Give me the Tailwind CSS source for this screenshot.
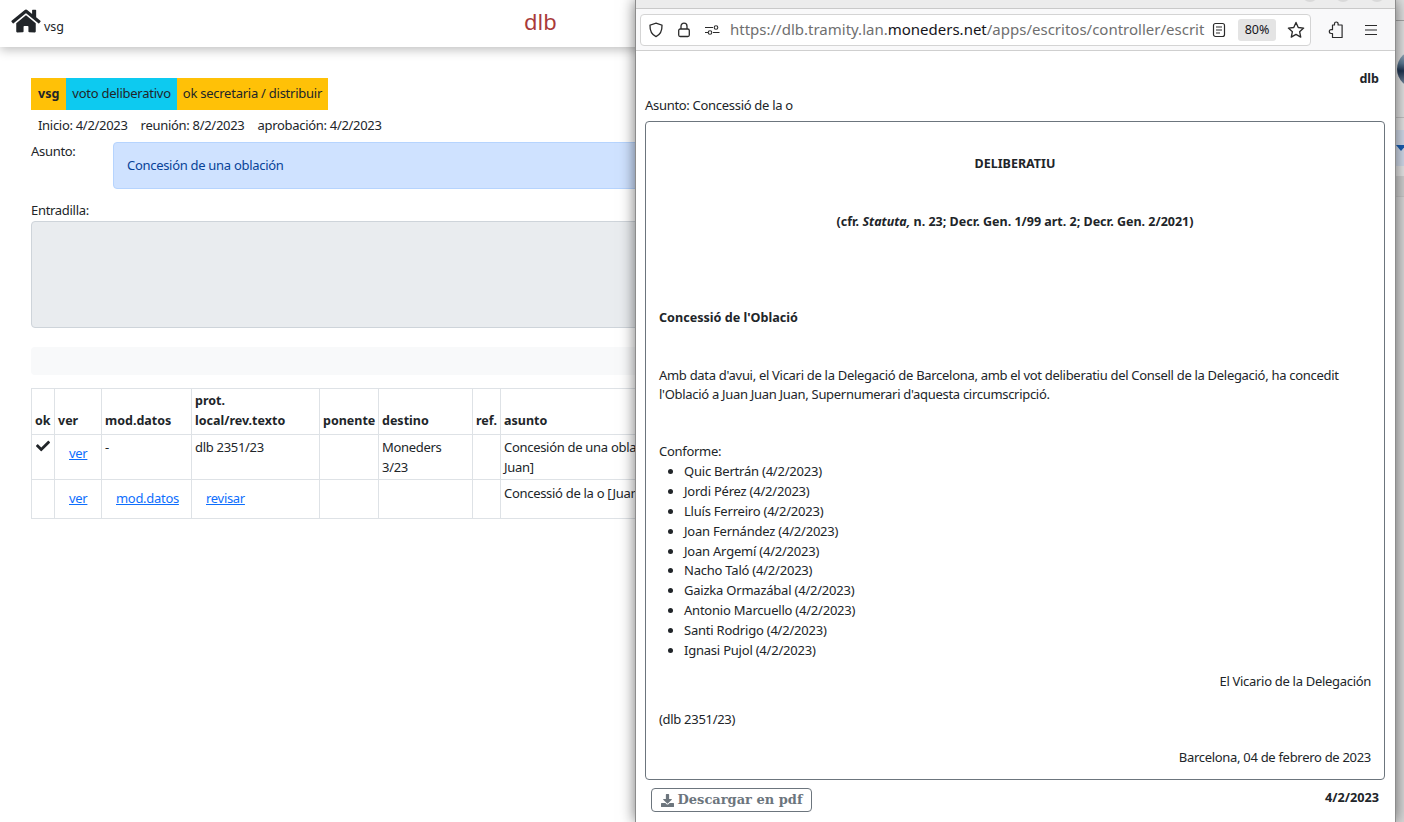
<!doctype html>
<html><head><meta charset="utf-8"><script src="https://cdn.jsdelivr.net/npm/@tailwindcss/browser@4"></script></head>
<body class="m-0 bg-white">
<div class="relative w-[1404px] h-[822px] overflow-hidden bg-white text-[#212529] text-[13px] leading-[19.8px] tracking-[-0.3px] font-['Noto_Sans',sans-serif]">
  <!-- base page -->
  <header class="h-[47px] bg-white shadow-[0_3px_10px_rgba(0,0,0,0.25)] flex relative">
    <div class="flex items-start pl-[11px] pt-[8px] w-[524px] shrink-0">
      <svg class="w-[30px] h-[26px]" viewBox="0 0 576 512" fill="#212529"><path d="M280.4 148.3 96 300.1V464a16 16 0 0 0 16 16l112-.3a16 16 0 0 0 15.9-16V368a16 16 0 0 1 16-16h64a16 16 0 0 1 16 16v95.6a16 16 0 0 0 16 16.1l112 .3a16 16 0 0 0 16-16V300L295.700 148.300a12.200 12.200 0 0 0-15.300 0zM571.600 251.500 488 182.600V44.100a12 12 0 0 0-12-12h-56a12 12 0 0 0-12 12v72.600L318.500 43a48 48 0 0 0-61 0L4.300 251.500a12 12 0 0 0-1.600 16.900l25.500 31a12 12 0 0 0 16.900 1.600l235.200-193.700a12.200 12.200 0 0 1 15.300 0L530.900 301a12 12 0 0 0 16.900-1.600l25.500-31a12 12 0 0 0-1.700-16.900z"/></svg>
      <span class="ml-[3px] mt-[9px] text-[12.500px] tracking-normal">vsg</span>
    </div>
    <div class="text-[#a93a3a] text-[22px] leading-[28px] pt-[7px] tracking-normal">dlb</div>
  </header>
  <main class="pl-[31px] pt-[31px] w-[640px]">
    <div class="flex h-[32px] leading-[31px]">
      <div class="bg-[#ffc107] px-[7px] font-bold text-[12.500px] tracking-normal">vsg</div>
      <div class="bg-[#0dcaf0] px-[6px] tracking-[-0.25px]">voto deliberativo</div>
      <div class="bg-[#ffc107] px-[6px] tracking-[-0.25px]">ok secretaria / distribuir</div>
    </div>
    <div class="flex gap-[13px] pl-[7px] pt-[1px] mt-[5px] h-[21px]"><span>Inicio: 4/2/2023</span><span>reunión: 8/2/2023</span><span>aprobación: 4/2/2023</span></div>
    <div class="flex mt-[6px]">
      <div class="w-[82px] shrink-0">Asunto:</div>
      <div class="w-[530px] h-[47px] bg-[#cfe2ff] border border-[#b6d4fe] rounded-[4px] text-[#084298] pl-[13px] pt-[13px] shrink-0">Concesión de una oblación</div>
    </div>
    <div class="mt-[11px] pt-[1px] h-[20px]">Entradilla:</div>
    <div class="w-[612px] h-[107px] mt-[1px] bg-[#e9ecef] border border-[#ced4da] rounded-[4px]"></div>
    <div class="w-[612px] h-[28px] mt-[19px] bg-[#f8f9fa] rounded-[4px]"></div>
    <table class="mt-[13px] border-collapse table-fixed w-[620px] text-[#212529]">
      <colgroup><col class="w-[23px]"><col class="w-[47px]"><col class="w-[90px]"><col class="w-[128px]"><col class="w-[59px]"><col class="w-[94px]"><col class="w-[28px]"><col class="w-[151px]"></colgroup>
      <thead><tr class="h-[46px] text-left align-bottom font-bold text-[12.500px] tracking-normal">
        <th class="border border-[#dee2e6] px-[3px] pb-[3px]">ok</th>
        <th class="border border-[#dee2e6] px-[3px] pb-[3px]">ver</th>
        <th class="border border-[#dee2e6] px-[3px] pb-[3px]">mod.datos</th>
        <th class="border border-[#dee2e6] px-[3px] pb-[3px]">prot.<br>local/rev.texto</th>
        <th class="border border-[#dee2e6] px-[3px] pb-[3px]">ponente</th>
        <th class="border border-[#dee2e6] px-[3px] pb-[3px]">destino</th>
        <th class="border border-[#dee2e6] px-[3px] pb-[3px]">ref.</th>
        <th class="border border-[#dee2e6] px-[3px] pb-[3px] whitespace-nowrap">asunto</th>
      </tr></thead>
      <tbody>
      <tr class="h-[45px] align-top">
        <td class="border border-[#dee2e6] px-[4px] pt-[3px]"><svg class="w-[14px] h-[14px] mt-[1px]" viewBox="0 0 512 512" fill="#212529"><path d="M173.900 439.400 7.500 273c-10-10-10-26.200 0-36.200l36.200-36.200c10-10 26.200-10 36.200 0L192 312.700 432.100 72.600c10-10 26.200-10 36.200 0l36.200 36.200c10 10 10 26.200 0 36.200L210.100 439.400c-10 10-26.200 10-36.200 0z"/></svg></td>
        <td class="border border-[#dee2e6] px-[3px] pl-[14px] pt-[9px]"><a class="text-[#0d6efd] underline">ver</a></td>
        <td class="border border-[#dee2e6] px-[3px] pt-[3px]">-</td>
        <td class="border border-[#dee2e6] px-[3px] pt-[3px]">dlb 2351/23</td>
        <td class="border border-[#dee2e6]"></td>
        <td class="border border-[#dee2e6] px-[3px] pt-[3px]">Moneders<br>3/23</td>
        <td class="border border-[#dee2e6]"></td>
        <td class="border border-[#dee2e6] px-[3px] pt-[3px] whitespace-nowrap">Concesión de una oblación<br>Juan]</td>
      </tr>
      <tr class="h-[39px] align-top">
        <td class="border border-[#dee2e6]"></td>
        <td class="border border-[#dee2e6] px-[3px] pl-[14px] pt-[9px]"><a class="text-[#0d6efd] underline">ver</a></td>
        <td class="border border-[#dee2e6] pl-[14px] pt-[9px]"><a class="text-[#0d6efd] underline">mod.datos</a></td>
        <td class="border border-[#dee2e6] pl-[14px] pt-[9px]"><a class="text-[#0d6efd] underline">revisar</a></td>
        <td class="border border-[#dee2e6]"></td>
        <td class="border border-[#dee2e6]"></td>
        <td class="border border-[#dee2e6]"></td>
        <td class="border border-[#dee2e6] px-[3px] pt-[4px] whitespace-nowrap">Concessió de la o [Juan Juan]</td>
      </tr>
      </tbody>
    </table>
  </main>
  <!-- underlying strip on the right -->
  <div class="absolute left-[1396px] top-0 w-[8px] h-[822px] bg-[#d4d4d4] flex flex-col">
    <div class="h-[21px] bg-[#e2e2e2] border-b border-[#a8a8a8]"></div>
    <div class="h-[97px] bg-[#e4e4e4] border-b border-[#c4c4c4] relative"><div class="absolute left-[1px] top-[29px] w-[38px] h-[38px] rounded-full bg-[linear-gradient(180deg,#a9bccb_0%,#5d7a94_35%,#1f3350_55%,#8ba0b4_100%)]"></div></div>
    <div class="h-[12px] bg-[#e6e6e6]"></div>
    <div class="h-[36px] bg-[#d3dcec] flex justify-start"><div class="w-0 h-0 border-l-[5px] border-r-[5px] border-t-[6px] border-l-transparent border-r-transparent border-t-[#1a5fb4] mt-[15px]"></div></div>
    <div class="h-[10px] bg-[#e8e8e8]"></div>
    <div class="h-[21px] bg-[#d2d2d2] border-b border-[#c8c8c8]"></div>
    <div class="flex-1 bg-[#dadada]"></div>
  </div>
  <!-- popup window -->
  <section class="absolute left-[635px] top-0 w-[761px] h-[822px] bg-white border-l border-r border-[#8c8c8c] shadow-[0_0_14px_rgba(0,0,0,0.55)] flex flex-col overflow-hidden">
    <div class="h-[9px] bg-[#ececec] border-b border-[#c9c9c9] shrink-0 relative">
      <div class="absolute left-[666px] -top-[14px] w-[16px] h-[16px] rounded-full bg-[#d9d9d9]"></div>
      <div class="absolute left-[699px] -top-[14px] w-[16px] h-[16px] rounded-full bg-[#d9d9d9]"></div>
      <div class="absolute left-[733px] -top-[14px] w-[16px] h-[16px] rounded-full bg-[#d9d9d9]"></div>
    </div>
    <div class="h-[42px] bg-[#f9f9fa] border-b border-[#cfcfcf] shrink-0 flex items-center pl-[4px]">
      <div class="w-[671px] h-[32px] bg-white border border-[#d4d4d4] rounded-[4px] flex items-center pl-[7px] shrink-0">
        <svg class="w-[16px] h-[16px] shrink-0" viewBox="0 0 16 16" fill="none" stroke="#2b2b2b" stroke-width="1.300"><path d="M8 1.200 14 3.200c.2 5.200-1.700 9.300-6 11.400C3.700 12.500 1.800 8.400 2 3.200z"/></svg>
        <svg class="w-[16px] h-[16px] ml-[12px] shrink-0" viewBox="0 0 16 16" fill="none" stroke="#2b2b2b" stroke-width="1.300"><rect x="2.700" y="7" width="10.600" height="7.500" rx="1.500"/><path d="M5 7V4.200a3 3 0 0 1 6 0V7"/></svg>
        <svg class="w-[16px] h-[16px] ml-[12px] shrink-0" viewBox="0 0 16 16" fill="none" stroke="#2b2b2b" stroke-width="1.100"><path d="M1 5.500h8M1 10.500h3M9 10.500h6.500"/><circle cx="12" cy="5.500" r="1.800"/><circle cx="6" cy="10.500" r="1.800"/></svg>
        <div class="ml-[10px] w-[476px] pt-[1px] whitespace-nowrap text-[15px] tracking-normal text-[#6f6f6f] shrink-0">https://dlb.tramity.lan.<span class="text-[#15141a]">moneders.net</span>/apps/escritos/controller/escrit</div>
        <svg class="w-[16px] h-[16px] ml-[5px] shrink-0" viewBox="0 0 16 16" fill="none" stroke="#2b2b2b" stroke-width="1.200"><rect x="2.500" y="1.500" width="11" height="13" rx="2"/><path d="M5 5h6M5 8h6M5 11h4"/></svg>
        <div class="ml-[11px] w-[38px] h-[22px] bg-[#e4e4e4] rounded-[3px] text-[12.500px] leading-[22px] text-center text-[#15141a] tracking-normal shrink-0">80%</div>
        <svg class="w-[18px] h-[18px] ml-[11px] shrink-0" viewBox="0 0 16 16" fill="none" stroke="#2b2b2b" stroke-width="1.200" stroke-linejoin="round"><path d="M8 1.300 10 5.800l4.800.5-3.600 3.200 1 4.800L8 11.900l-4.200 2.400 1-4.800L1.200 6.300 6 5.800z"/></svg>
      </div>
      <svg class="w-[16px] h-[18px] ml-[17px] shrink-0" viewBox="0 0 16 18" fill="none" stroke="#2b2b2b" stroke-width="1.200" stroke-linejoin="round"><path d="M6.500 4V2.800a1.800 1.800 0 0 1 3.600 0V4h4v12.500H4.500v-4H3.200a1.900 1.900 0 0 1 0-3.800h1.300V4z"/></svg>
      <svg class="w-[16px] h-[16px] ml-[19px] shrink-0" viewBox="0 0 16 16" fill="none" stroke="#2b2b2b" stroke-width="1.200"><path d="M2 3.500h12M2 8h12M2 12.500h12"/></svg>
    </div>
    <div class="relative flex-1 px-[9px]">
      <div class="text-right font-bold text-[12.500px] tracking-normal pr-[7px] pt-[18px] h-[44px]">dlb</div>
      <div class="h-[26px] pt-[1px]">Asunto: Concessió de la o</div>
      <div class="w-[740px] h-[659px] border border-[#6c757d] rounded-[4px] px-[13px]">
        <div class="text-center font-bold text-[12.500px] tracking-normal mt-[32px] h-[20px]">DELIBERATIU</div>
        <div class="text-center font-bold text-[12.500px] tracking-normal mt-[38px] h-[20px]">(cfr. <i>Statuta,</i> n. 23; Decr. Gen. 1/99 art. 2; Decr. Gen. 2/2021)</div>
        <div class="font-bold text-[12.600px] tracking-normal mt-[76px] h-[20px]">Concessió de l'Oblació</div>
        <p class="mt-[38px] leading-[19px]">Amb data d'avui, el Vicari de la Delegació de Barcelona, amb el vot deliberatiu del Consell de la Delegació, ha concedit<br>l'Oblació a Juan Juan Juan, Supernumerari d'aquesta circumscripció.</p>
        <div class="mt-[38px]">Conforme:</div>
        <ul class="list-disc pl-[25px] mt-[0.6px] tracking-[-0.22px]">
          <li>Quic Bertrán (4/2/2023)</li><li>Jordi Pérez (4/2/2023)</li><li>Lluís Ferreiro (4/2/2023)</li><li>Joan Fernández (4/2/2023)</li><li>Joan Argemí (4/2/2023)</li><li>Nacho Taló (4/2/2023)</li><li>Gaizka Ormazábal (4/2/2023)</li><li>Antonio Marcuello (4/2/2023)</li><li>Santi Rodrigo (4/2/2023)</li><li>Ignasi Pujol (4/2/2023)</li>
        </ul>
        <div class="text-right mt-[12px]">El Vicario de la Delegación</div>
        <div class="mt-[18px]">(dlb 2351/23)</div>
        <div class="text-right mt-[18px]">Barcelona, 04 de febrero de 2023</div>
      </div>
      <div class="flex justify-between items-start mt-[8px] pl-[6px] pr-[7px]">
        <button class="h-[24px] w-[161px] border border-[#6c757d] rounded-[4px] flex items-center justify-center gap-[4px] text-[#6c757d] font-bold font-['DejaVu_Serif',serif] text-[13px] tracking-normal"><svg class="w-[13px] h-[13px]" viewBox="0 0 512 512" fill="#6c757d"><path d="M216 0h80c13.300 0 24 10.700 24 24v168h87.700c17.800 0 26.700 21.500 14.100 34.100L269.700 378.300c-7.500 7.500-19.800 7.500-27.300 0L90.100 226.100c-12.600-12.600-3.700-34.100 14.100-34.100H192V24c0-13.300 10.700-24 24-24zm296 376v112c0 13.300-10.700 24-24 24H24c-13.300 0-24-10.700-24-24V376c0-13.300 10.700-24 24-24h146.700l49 49c20.100 20.100 52.500 20.100 72.600 0l49-49H488c13.300 0 24 10.700 24 24z"/></svg>Descargar en pdf</button>
        <div class="font-bold text-[12.700px] tracking-normal">4/2/2023</div>
      </div>
    </div>
  </section>
</div>
</body></html>
